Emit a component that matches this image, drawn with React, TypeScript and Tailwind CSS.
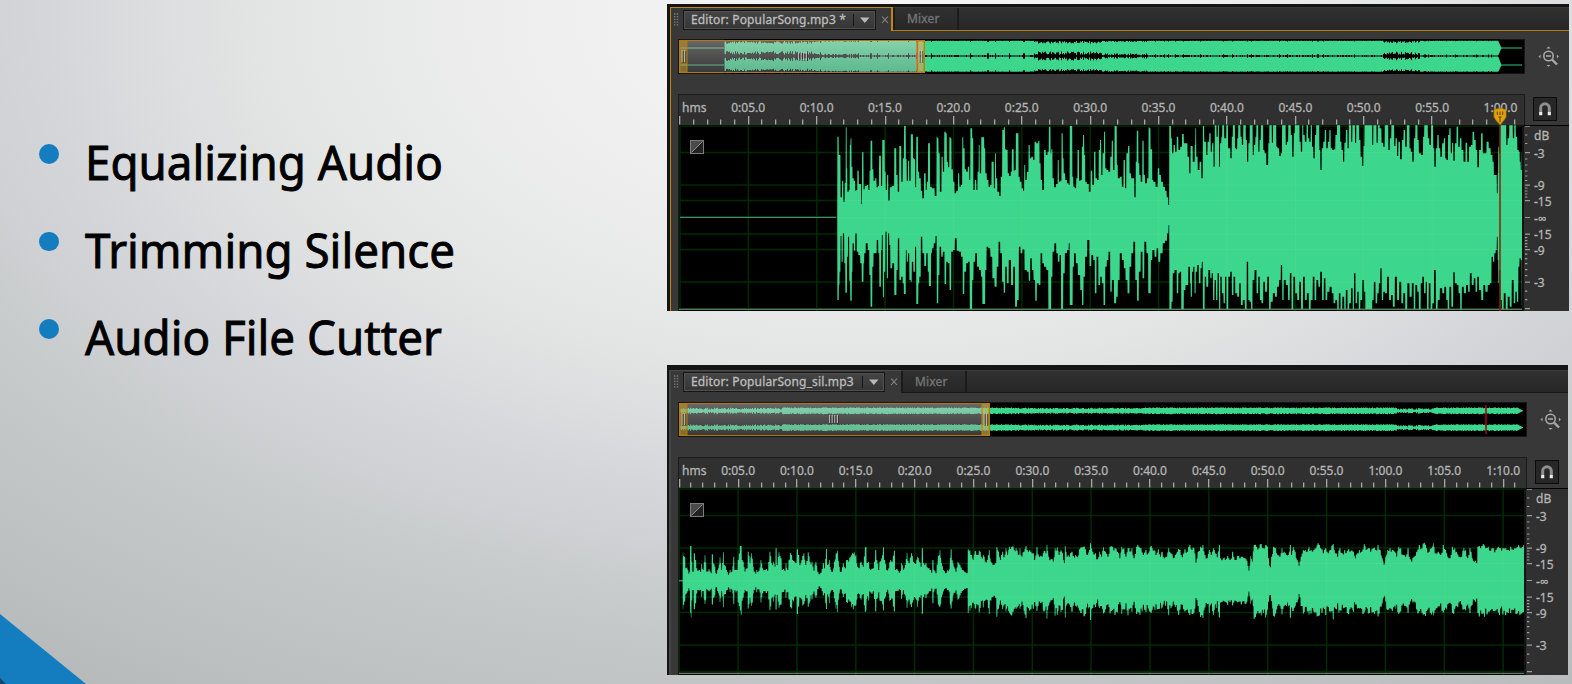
import React from "react";

const GREEN = "#3cd68c";

// Envelope samples are stored at three units per pixel, as x,y pairs.
const A_TOP_1 =
  "52,320 52,80 56,80 56,135 61,135 62,262 66,262 66,212 69,212 71,275 74,275 74,218 77,218 77,52 80,52 80,175 84,245 88,240 90,105 93,85 96,170 99,205 104,212 107,242 111,240 113,182 116,182 117,222 122,222 125,282 127,127 130,127 131,238 137,228 143,225 147,240 150,182 153,92 156,92 158,178 163,212 168,205 171,232 176,228 178,137 182,137 184,228 189,90 193,90 195,185 199,240 203,195 207,272 211,232 220,228 225,115 228,115 230,195 236,245 239,108 243,108 245,215 251,145 253,48 257,48 258,148 262,212 266,152 269,212 275,73 278,73 280,145 284,148 287,232 290,80 293,80 295,185 300,205 305,242 309,265 315,190 319,240 322,215 326,100 329,100 331,230 340,235 348,258 351,80 354,85 357,130 362,245 367,140 370,185 375,65 379,70 382,155 386,172 390,82 393,85 396,178 402,215 405,250 412,242 416,190 420,230 425,225 428,82 432,115 436,178 441,185 446,170 450,210 452,55 455,55 458,85 462,240 467,210 471,240 474,185 478,105 480,190 487,82 491,82 494,115 498,190 503,210 508,230 513,225 516,155 520,155 523,235 527,130 529,205 535,245 540,258 544,200 549,60 554,52 556,118 562,120 564,190 570,198 574,185 577,118 580,118 582,182 586,180 589,70 594,70 597,200 602,215 607,235 611,242 614,165 618,210 623,185 628,105 631,145 637,140 641,150 646,95 652,100 657,92 660,160 664,210 669,240 675,120 680,135 685,125 688,50 691,50 692,130 696,118 699,205 705,232 711,222 715,150 718,215 724,212 725,70 728,70 729,145 733,190 738,210 744,220 748,225 750,48 756,48 758,200 762,230 767,235 770,205 775,120 779,212 784,210 787,110 791,75 794,135 797,215 804,222 809,245 815,182 819,225 825,125 828,205 834,210 838,120 842,90 845,195 850,130 854,65 857,175 862,180 868,185 873,140 877,92 881,180 886,48 890,48 891,165 896,205 903,200 908,230 913,150 917,235 921,130 927,108 930,190 936,205 941,205 945,262 949,155 951,62 954,62 956,160 960,195 964,215 970,92 972,195 978,220 984,205 987,52 990,55 993,118 996,118 997,210 1003,215 1010,230 1016,175 1020,195 1026,215 1032,230 1038,242 1042,262 1047,285 1048,48 1052,48 1054,85 1058,130 1063,105 1067,125 1073,80 1077,120 1084,110 1088,72 1095,100 1100,100 1105,140 1110,190";
const A_BOT_1 =
  "52,320 52,570 56,570 57,525 60,485 63,378 66,455 71,370 74,460 78,548 80,548 82,440 86,380 89,512 92,572 95,572 96,485 99,400 104,422 108,370 112,425 118,435 123,460 127,515 130,515 131,460 134,430 140,400 146,420 150,495 153,590 156,590 158,470 163,430 168,430 172,390 177,430 179,530 182,530 184,420 187,375 190,562 194,485 198,365 202,505 206,370 209,405 213,475 220,460 225,555 228,555 231,480 236,385 240,510 246,500 250,520 253,552 257,552 258,420 262,455 266,430 270,510 274,515 277,455 283,485 287,410 290,582 294,582 296,520 300,500 305,380 309,430 316,468 321,430 325,485 328,528 332,528 334,430 338,415 344,400 349,378 351,580 354,580 356,495 361,410 366,440 371,425 376,522 381,455 386,460 391,540 396,425 402,420 407,385 413,422 420,425 426,440 430,552 436,485 441,460 447,455 451,597 455,597 458,510 463,455 468,430 474,470 480,480 486,500 488,582 494,582 497,480 502,410 508,415 514,440 520,505 527,530 533,470 538,395 543,430 549,515 553,548 558,470 563,520 569,450 577,525 582,470 588,590 594,570 599,410 604,430 610,418 617,480 624,485 628,512 633,445 638,480 643,510 648,572 653,520 659,525 664,430 669,460 675,470 682,480 688,597 692,597 695,500 700,425 706,400 711,430 716,455 721,435 725,597 728,597 731,490 738,430 744,420 748,400 750,585 757,585 759,470 765,430 770,460 777,495 784,540 788,585 793,500 797,440 806,390 811,468 817,435 822,450 827,550 832,440 838,525 843,500 848,520 853,585 858,470 863,450 868,425 873,545 878,510 886,580 891,560 896,510 902,430 909,450 914,475 919,510 926,550 931,470 937,430 943,395 948,510 954,572 959,485 965,425 970,505 976,395 982,430 987,550 991,550 994,450 1000,420 1007,440 1012,415 1018,455 1024,430 1032,400 1038,392 1044,370 1047,345 1049,600 1053,600 1056,575 1060,490 1067,480 1073,550 1077,490 1081,485 1086,600 1090,600 1093,540 1100,525 1110,470";
const A_TOP_2 =
  "0,190 3,108 7,108 9,155 13,155 15,105 17,55 20,140 26,180 31,155 37,205 40,48 42,48 43,95 47,95 50,135 55,95 60,70 64,125 68,100 73,170 75,46 79,46 80,80 83,80 84,46 86,46 88,170 92,100 96,80 97,46 101,46 104,85 108,85 110,46 113,46 115,115 119,115 123,145 127,80 130,46 134,46 136,115 140,118 143,85 146,46 150,46 153,80 158,105 161,46 166,46 169,90 173,155 177,100 181,46 187,46 189,135 194,105 198,80 200,46 204,46 206,125 211,90 214,46 218,46 221,120 226,130 232,165 237,100 239,46 244,46 247,98 251,46 258,46 260,110 265,115 270,138 275,130 277,46 286,46 288,105 293,95 296,46 301,46 304,75 309,140 313,70 316,46 327,46 330,95 335,125 338,46 342,75 347,95 352,46 356,85 360,95 364,46 368,110 372,145 377,75 380,46 387,46 389,120 393,180 397,115 402,95 406,60 411,115 416,95 420,60 424,115 429,120 434,118 438,75 444,46 449,46 452,95 457,120 461,155 465,98 470,60 475,115 478,46 482,46 485,95 489,46 494,46 496,98 501,46 506,46 509,90 514,140 519,168 522,108 525,46 545,46 548,105 552,46 558,46 561,98 566,46 572,55 577,98 582,110 586,46 593,46 597,120 602,85 606,46 611,46 614,108 619,85 623,138 627,95 633,148 638,90 643,60 648,110 653,46 657,46 660,115 665,125 669,155 674,85 678,46 681,46 684,90 689,130 697,135 701,80 704,46 712,46 715,85 721,105 725,46 728,46 731,115 735,170 740,115 744,75 749,115 753,140 759,100 764,85 767,145 772,150 776,75 780,55 784,130 788,98 792,152 797,100 802,50 807,110 812,85 817,120 824,155 829,98 834,155 840,110 845,105 850,65 855,90 860,120 864,172 870,120 876,70 880,130 886,130 893,95 899,115 905,135 910,155 913,195 919,195 922,250 924,190 925,110 929,130 933,46 948,46 950,105 955,85 960,46 967,46 970,85 975,46 980,80 984,120 988,125 990,155 994,180 996,130 999,130";
const A_BOT_2 =
  "0,520 4,560 8,485 12,470 15,550 19,485 24,465 29,520 34,475 37,455 40,597 43,597 45,500 52,530 58,480 63,505 67,490 71,570 76,510 80,570 85,490 89,600 93,500 98,550 103,580 107,500 112,597 118,500 123,485 128,555 133,500 138,550 145,560 150,520 155,585 162,570 167,597 173,455 176,570 181,575 185,597 190,510 197,480 202,550 207,500 212,570 217,580 222,515 228,545 235,500 239,597 245,575 252,550 258,560 264,530 270,510 275,465 278,570 284,510 291,525 297,570 302,490 307,600 313,500 318,550 325,570 330,515 336,600 342,500 347,570 354,550 359,597 365,570 371,500 376,570 382,510 388,530 393,485 399,570 404,505 409,570 415,545 422,530 428,550 433,580 439,570 444,600 449,550 454,597 460,560 465,597 470,540 475,597 480,580 486,535 490,597 494,490 499,580 504,545 508,597 514,570 520,510 524,545 528,600 544,600 549,570 554,515 559,580 564,550 569,520 573,475 577,570 582,545 588,550 594,500 600,570 606,555 611,590 618,500 624,570 631,515 637,580 642,550 649,600 655,520 662,560 669,520 673,597 679,525 684,545 689,600 695,520 699,500 705,550 709,515 713,597 719,520 724,600 729,580 735,480 740,597 746,570 753,535 760,550 766,530 771,570 775,600 781,530 787,590 792,487 797,520 803,525 808,550 813,597 818,530 825,550 831,525 837,545 842,490 848,525 854,505 859,545 864,500 870,540 877,570 883,525 889,545 897,525 902,520 907,440 911,455 915,430 919,420 922,380 924,450 926,520 930,480 933,570 938,600 944,550 950,600 956,560 962,590 968,510 974,580 978,545 983,575 987,470 990,445 994,450 996,585 999,585";
const B_1 =
  "68,182 68,97 74,110 78,145 84,150 89,155 91,78 94,78 95,125 99,155 103,100 107,120 110,145 118,150 122,155 125,132 130,150 135,105 140,155 147,148 154,160 156,103 158,103 160,130 165,140 170,162 175,145 180,112 185,150 190,97 193,135 200,150 205,165 210,150 216,155 221,110 225,150 231,150 235,120 241,78 244,78 246,120 250,125 255,155 261,145 265,95 270,130 275,100 280,140 285,155 290,150 297,152 303,120 308,145 315,150 323,152 330,95 335,130 340,125 345,140 348,85 352,135 357,97 363,115 367,150 375,152 378,130 383,150 392,100 398,120 404,125 408,130 412,88 416,105 420,135 425,120 432,100 437,135 445,97 450,125 456,125 462,152 468,125 473,155 483,158 490,130 494,145 499,87 503,135 508,120 513,150 518,155 523,125 528,100 533,92 538,140 544,155 550,130 556,145 560,120 566,125 572,110 577,100 583,97 588,105 593,140 598,145 603,125 610,140 616,82 619,82 620,130 626,125 632,150 640,145 647,90 651,120 656,150 660,125 665,115 670,82 674,120 680,150 686,145 692,120 697,125 703,92 707,150 712,148 718,158 725,130 730,150 736,135 741,100 747,130 755,100 760,125 767,132 773,110 778,125 783,140 787,85 791,130 798,130 805,145 810,150 815,158 819,120 822,150 828,160 835,108 840,90 845,130 850,150 857,160 862,150 868,148 873,88 877,120 882,140 888,155 894,125 900,135 907,150 914,155 921,160 925,88 930,90 935,105 940,120 945,92 950,105 958,92 964,110 970,105 976,125 982,120 988,90 993,125 999,135 1007,130 1011,82 1016,95 1021,120 1028,95 1032,112 1038,85 1043,105 1048,80 1055,80 1063,90 1068,85 1075,105 1080,85 1086,110 1092,95 1098,78 1105,95 1113,95 1120,100 1124,120 1131,82 1138,110 1147,110 1152,92 1158,100 1161,75 1166,110 1173,118 1180,125 1185,85 1192,82 1197,105 1203,90 1208,100 1213,130 1216,78 1221,110 1228,110 1236,95 1240,108 1247,105 1252,112 1258,88 1268,82 1277,88 1283,105 1288,90 1292,70 1298,95 1307,100 1313,118 1319,95 1325,110 1330,82 1337,95 1344,110";
const B_2 =
  "0,200 8,200 15,205 22,215 30,235 35,200 42,205 48,230 54,205 60,215 66,205 72,235 80,200 87,200 93,205 100,225 108,210 115,220 121,200 127,205 132,210 138,225 145,208 152,230 157,215 163,235 170,230 176,205 183,220 190,235 196,225 202,215 210,210 217,232 225,208 232,215 240,195 246,210 252,205 258,248 264,215 272,200 279,195 285,225 292,235 298,210 304,225 311,205 316,220 322,232 328,195 332,235 340,235 346,240 353,228 360,240 368,215 375,240 382,228 390,235 398,230 405,235 411,242 417,272 422,228 427,245 432,195 440,200 447,205 454,192 460,205 467,195 472,200 476,235 481,262 485,230 490,200 497,205 503,225 510,230 516,205 522,215 530,225 535,225 541,195 545,225 550,200 556,215 562,240 567,258 573,230 580,210 586,210 592,215 597,200 603,210 612,210 618,205 624,190 632,205 640,220 647,205 655,220 662,210 670,192 676,220 683,230 690,205 697,220 704,210 712,212 720,215 726,210 731,215 736,235 742,220 748,210 755,215 763,192 768,210 775,205 782,215 790,205 797,210 804,195 811,210 817,235 822,255 827,230 833,210 840,205 847,210 855,215 860,230 866,200 872,205 880,225 887,230 894,205 898,230 905,245 912,230 920,215 928,195 936,205 943,188 950,205 957,215 965,205 970,190 975,220 985,215 992,225 1000,195 1007,210 1013,230 1020,235 1027,200 1035,205 1040,215 1047,230 1055,230 1062,205 1067,210 1073,235 1080,205 1087,235 1093,245 1100,250 1104,200 1112,205 1120,192 1127,205 1135,200 1142,212 1150,205 1158,210 1165,200 1172,205 1178,205 1187,205 1195,210 1202,200 1210,210 1218,205 1226,195 1233,205 1242,195 1245,230";

type Pt = [number, number];

// Converts stored samples to plot pixels.
const pts = (s: string, dx: number, dy: number): Pt[] =>
  s.split(" ").map((p) => {
    const [x, y] = p.split(",").map(Number);
    return [x / 3 + dx, y / 3 + dy];
  });

const rand = (n: number) => {
  const v = Math.sin(n * 127.1 + 11.7) * 43758.5453;
  return v - Math.floor(v);
};

// Holds each sample until halfway to the next one, so peaks stand as narrow columns.
const steps = (p: Pt[]): Pt[] => {
  const out: Pt[] = [];
  p.forEach(([x, y], i) => {
    const l = i ? (p[i - 1][0] + x) / 2 : x;
    const r = i < p.length - 1 ? (p[i + 1][0] + x) / 2 : x;
    out.push([l + 0.1, y], [r - 0.1, y]);
  });
  return out;
};

const area = (top: Pt[], bottom: Pt[]) =>
  "M" + [...steps(top), ...steps(bottom).reverse()].map(([x, y]) => `${x.toFixed(1)} ${y.toFixed(1)}`).join("L") + "Z";

// Plot origin is x=679, y=125 for the first editor and x=679, y=488 for the second.
const waveA = area(
  [...pts(A_TOP_1, 141, -15), ...pts(A_TOP_2, 511, -15)],
  [...pts(A_BOT_1, 141, -15), ...pts(A_BOT_2, 511, -15)],
);

// Adds a sample between wide neighbours to keep the fine texture.
const fine = (p: Pt[], spread: number): Pt[] =>
  p.flatMap(([x, y], i): Pt[] => {
    const next = p[i + 1];
    if (!next || next[0] - x < 1.6) return [[x, y]];
    return [[x, y], [(x + next[0]) / 2, (y + next[1]) / 2 + (rand(i) - 0.4) * spread]];
  });
const topB = fine([...pts(B_1, -19, 32), ...pts(B_2, 431, -8)], 5);
const botB = topB.map(([x, y], i): Pt => [x, 92.8 + (92.8 - y) * (0.84 + 0.24 * rand(i))]);
const waveB = area(topB, botB);

function columns(from: number, to: number, fn: (x: number) => string) {
  let d = "";
  for (let x = from; x < to; x += 1) d += fn(x);
  return d;
}

const gapSize = (x: number) => {
  if (x < 143) return 5;
  if (x < 180) return 2.4;
  if (x < 356) return 1.6;
  if (x < 424) return 4.6;
  if (x < 470) return 2.6;
  if (x < 705) return 1;
  if (x < 742) return 4.4;
  return 0.9;
};

const gapsA = columns(46, 822, (x) => {
  const g = gapSize(x);
  const r = rand(x);
  const a = g > 2 ? g * (0.25 + 0.75 * r) : r > 0.9 ? g * 1.7 : 0.6 + (r > 0.6 ? 0.5 : 0);
  const e = a * 0.7;
  return `M${x} ${(17 - a).toFixed(1)}h1v${(2 * a).toFixed(1)}h-1zM${x} 0h1v${(e + 1.2).toFixed(1)}h-1zM${x} ${(33.2 - e).toFixed(1)}h1v4h-1z`;
});

const ampB = (x: number) => {
  const r = rand(x + 400);
  if (x > 838) return Math.max(0.5, (845 - x) * 0.5);
  if (x < 105) return 1.3 + r * 1.8;
  if (x > 718 && x < 756) return 1.2 + r * 1.4;
  if (x > 340 && x < 465) return 1.9 + r * 1.1;
  return 2.5 + r * 0.9;
};
const overviewB = columns(2, 845, (x) => {
  const a = ampB(x);
  return `M${x} ${(8.8 - a).toFixed(1)}h1v${(2 * a).toFixed(1)}h-1zM${x} ${(25.6 - a).toFixed(1)}h1v${(2 * a).toFixed(1)}h-1z`;
});

function Grip({ x, y, n = 4, h = 8 }: { x: number; y: number; n?: number; h?: number }) {
  return (
    <g>
      {Array.from({ length: n }, (_, i) => (
        <g key={i}>
          <rect x={x + i * 2.6} y={y} width="1.2" height={h} fill="#c9c9c9" opacity="0.8" />
          <rect x={x + i * 2.6 + 1.2} y={y + 1} width="0.9" height={h} fill="#222" opacity="0.7" />
        </g>
      ))}
    </g>
  );
}

function Overview({ kind }: { kind: "a" | "b" }) {
  const a = kind === "a";
  const w = a ? 847 : 849;
  const end = a ? 246 : 311;
  return (
    <svg width={w} height="35" viewBox={`0 0 ${w} 35`} className="block">
      <defs>
        <linearGradient id={`sel-${kind}`} x1="0" y1="0" x2="0" y2="1">
          <stop offset="0" stopColor="#d0d0d0" stopOpacity="0.5" />
          <stop offset="1" stopColor="#909090" stopOpacity="0.4" />
        </linearGradient>
      </defs>
      <rect width={w} height="35" fill="#161616" />
      <rect x="1" y="1" width={w - 2} height="33" fill="#000" />
      {a ? (
        <g>
          <path d="M2 9h44M2 26h44M822 9h22M822 26h22" stroke="#238354" strokeWidth="1.6" />
          <path d="M46.5 1.5H820L823.5 9L820 17L823.5 26L820 33.5H46.5Z" fill={GREEN} />
          <path d={gapsA} fill="#000" />
        </g>
      ) : (
        <path d={overviewB} fill={GREEN} />
      )}
      <rect x="2" y="1" width={end - 2} height="33" fill={`url(#sel-${kind})`} />
      <rect x="1.5" y="1.5" width={end - 1} height="32" fill="none" stroke="#b07a10" />
      <rect x="2" y="2" width="7" height="31" fill="#c99a20" fillOpacity="0.5" stroke="#b07c0f" />
      <rect x={end - 7} y="2" width="7" height="31" fill="#d0b040" fillOpacity="0.5" stroke="#b8860f" />
      <Grip x={3.5} y={11} n={2} h={12} />
      <Grip x={end - 5.5} y={11} n={2} h={12} />
      <Grip x={a ? 120 : 151} y={13} n={4} />
      {a ? (
        <path d="M239.5 2V33" stroke="#e0622c" strokeWidth="1.4" />
      ) : (
        <path d="M808 3V32" stroke="#a00808" strokeWidth="1.6" />
      )}
    </svg>
  );
}

const H_LINES = [1, 27.5, 60, 75.5, 92.3, 109, 124.5, 157, 183.5];

function Plot({ kind }: { kind: "a" | "b" }) {
  const a = kind === "a";
  const w = a ? 845 : 847;
  const h = a ? 186 : 187;
  const step = a ? 68.37 : 58.85;
  const start = a ? 1 : 0.2;
  const n = a ? 13 : 15;
  const grid = (
    <path
      d={
        Array.from({ length: n }, (_, i) => `M${(start + i * step).toFixed(1)} 0V${h}`).join("") +
        H_LINES.map((y) => `M1 ${y}H${w - 2}`).join("")
      }
      fill="none"
    />
  );
  return (
    <svg width={w} height={h} viewBox={`0 0 ${w} ${h}`} className="block">
      <rect width={w} height={h} fill="#000" />
      <g stroke="#002a00" strokeWidth="1.5">
        {grid}
      </g>
      <path d={a ? "M1 92.4H157" : "M0 92.8H4"} stroke="#3f8f68" strokeWidth="1.4" />
      <path d={a ? waveA : waveB} fill={GREEN} />
      <g stroke="#5be08a" strokeOpacity="0.35" strokeWidth="1" clipPath={`url(#clip-${kind})`}>
        {grid}
      </g>
      <clipPath id={`clip-${kind}`}>
        <path d={a ? waveA : waveB} />
      </clipPath>
      <path d={`M0 ${h - 1.7}H${w - 1}`} stroke="#5f7d66" strokeWidth="1.2" />
      {a && <path d="M821 0V186" stroke="#86200c" strokeWidth="1.5" />}
      <rect x={w - 2} width="2" height={h} fill="#141414" />
      <rect x="11.5" y="15.5" width="13" height="13" fill="#4a4a4a" stroke="#7c7c7c" />
      <path d="M24 16V28H12Z" fill="#222" />
      <path d="M12.5 27.5L23.5 16.5" stroke="#8c8c8c" strokeWidth="1" />
    </svg>
  );
}

function Ticks({ kind }: { kind: "a" | "b" }) {
  const a = kind === "a";
  const w = a ? 845 : 847;
  const minor = (a ? 68.37 : 58.85) / 5;
  const start = a ? 0.4 : -0.3;
  const n = a ? 62 : 72;
  return (
    <svg width={w} height="9" viewBox={`0 0 ${w} 9`} className="block">
      {Array.from({ length: n }, (_, i) => (
        <rect
          key={i}
          x={Math.max(0, Math.round(start + i * minor))}
          y={i % 5 ? 3.5 : 0}
          width="1.3"
          height={i % 5 ? 5 : 8.5}
          fill="#a8a8a8"
        />
      ))}
    </svg>
  );
}

function ZoomIcon() {
  return (
    <svg width="22" height="22" viewBox="0 0 22 22" fill="none" className="block">
      <circle cx="10.5" cy="10" r="4.7" stroke="#a9a9a9" strokeWidth="1.6" />
      <path d="M8 10H13" stroke="#a9a9a9" strokeWidth="1.6" />
      <path d="M14 13.5L19 18.5" stroke="#a9a9a9" strokeWidth="2.4" />
      <path d="M10.5 0.6L12.6 2.5H8.4ZM10.5 20.8L12.6 18.9H8.4ZM0.6 10.5L2.5 8.4V12.6ZM20.8 10.5L18.9 8.4V12.6Z" fill="#a9a9a9" />
    </svg>
  );
}

function Magnet() {
  return (
    <div className="flex h-6 w-6 items-center justify-center border border-[#0c0c0c] bg-[#272727]">
      <svg width="14" height="16" viewBox="0 0 14 16" fill="none">
        <path d="M2.7 14V7A4.3 4.3 0 0 1 11.3 7V14" stroke="#8f8f8f" strokeWidth="3" />
        <path d="M2.7 11V14.2M11.3 11V14.2" stroke="#ececec" strokeWidth="3" />
      </svg>
    </div>
  );
}

function DbScale({ h }: { h: number }) {
  const minor = [10, 18.5, 34, 40, 46, 51, 55.5, 63, 66, 69, 72];
  return (
    <div className="flex flex-1 border-t border-black bg-[#303030]">
      <svg width="7" height={h - 1} viewBox={`0 1 7 ${h - 1}`} className="block shrink-0">
        <path
          d={H_LINES.map((y) => `M1 ${y + 0.2}H6`).join("") + [...minor, ...minor.map((m) => 184.6 - m)].map((y) => `M1 ${y}H3.4`).join("")}
          stroke="#9a9a9a"
          strokeWidth="1.2"
        />
      </svg>
      <div className="flex flex-col pt-px pl-[3px] text-[12px] leading-none text-[#b4b4b4] [-webkit-text-stroke:0.3px_#b4b4b4]">
        <span className="flex h-[18px] items-center">dB</span>
        <span className="flex h-[17px] items-center">-3</span>
        <span className="mt-[16px] flex h-[16px] items-center">-9</span>
        <span className="flex h-[16px] items-center">-15</span>
        <span className="flex h-[17px] items-center">-∞</span>
        <span className="flex h-[16px] items-center">-15</span>
        <span className="flex h-[16px] items-center">-9</span>
        <span className="mt-[16px] flex h-[16px] items-center">-3</span>
      </div>
    </div>
  );
}

function Header({ kind, title }: { kind: "a" | "b"; title: string }) {
  const a = kind === "a";
  return (
    <div className={a ? "flex h-[24px]" : "flex h-[23px]"}>
      <div
        className={
          a
            ? "flex w-[222px] items-center border-t border-r-2 border-[#c08512] bg-[#383838]"
            : "flex w-[230px] items-center border-t border-[#4c4c4c] bg-[#383838]"
        }
      >
        <svg width="12" height="14" viewBox="0 0 12 14" className="block shrink-0">
          {[0, 1, 2, 3, 4].map((i) => (
            <path key={i} d={`M3 ${i * 2.7 + 1}h1.4M5.8 ${i * 2.7 + 1}h1.4`} stroke="#7d7d7d" strokeWidth="1.3" />
          ))}
        </svg>
        <div
          className={
            a
              ? "flex h-[20px] w-[193px] items-center border border-[#161616] bg-gradient-to-b from-[#454545] to-[#353535] outline outline-1 -outline-offset-2 outline-[#505050]"
              : "flex h-[20px] w-[202px] items-center border border-[#161616] bg-gradient-to-b from-[#454545] to-[#353535] outline outline-1 -outline-offset-2 outline-[#505050]"
          }
        >
          <span className="flex-1 pl-[7px] text-[12px] leading-none tracking-[0.15px] whitespace-nowrap text-[#bdbdbd] [-webkit-text-stroke:0.3px_#bdbdbd]">
            {title}
          </span>
          <svg width="22" height="14" viewBox="0 0 22 14" className="block shrink-0">
            <path d="M0.5 1V13" stroke="#171717" />
            <path d="M7 4.5H16.5L11.8 10Z" fill="#b8b8b8" />
          </svg>
        </div>
        <svg width="15" height="10" viewBox="0 0 15 10" className="block shrink-0">
          <path d="M6 1.5L12 8M12 1.5L6 8" stroke="#8c8c8c" strokeWidth="1.1" />
        </svg>
      </div>
      <div
        className={
          a
            ? "flex flex-1 border-t border-b border-t-[#3a3a3a] border-b-[#b07a14] bg-gradient-to-b from-[#303030] to-[#272727]"
            : "flex flex-1 border-t border-b border-t-[#3a3a3a] border-b-[#161616] bg-gradient-to-b from-[#303030] to-[#272727]"
        }
      >
        <div className="flex w-[66px] items-center border-r-2 border-l-2 border-[#1b1b1b] pl-[12px] text-[12px] leading-none tracking-[0.15px] text-[#767676] [-webkit-text-stroke:0.3px_#767676]">
          Mixer
        </div>
      </div>
    </div>
  );
}

function Editor({ kind, title, labels }: { kind: "a" | "b"; title: string; labels: string[] }) {
  const a = kind === "a";
  return (
    <section
      className={
        a
          ? "flex h-[307px] w-[902px] flex-col bg-[#141414] pt-[3px] pl-[3px]"
          : "flex h-[310px] w-[901px] flex-col bg-[#141414] pt-[5px] pl-[2px]"
      }
    >
      <div
        className={
          a
            ? "flex flex-1 flex-col border-l border-[#c08512] bg-[#383838]"
            : "flex flex-1 flex-col border-l-2 border-[#454545] bg-[#383838]"
        }
      >
        <Header kind={kind} title={title} />
        <div className={a ? "mt-[8px] ml-[7px] flex" : "mt-[9px] ml-[7px] flex"}>
          <Overview kind={kind} />
          <div className="flex flex-1 items-center pl-[13px]">
            <ZoomIcon />
          </div>
        </div>
        <div className="mt-[20px] ml-[7px] flex h-[31px]">
          <div
            className={
              a
                ? "flex w-[847px] flex-col border-x border-t border-[#1a1a1a] bg-[#303030]"
                : "flex w-[849px] flex-col border-x border-t border-[#1a1a1a] bg-[#303030]"
            }
          >
            <div className="flex h-[21px] items-end overflow-hidden text-[12px] leading-[17px] text-[#b4b4b4] [-webkit-text-stroke:0.3px_#b4b4b4]">
              <span className={a ? "w-[35px] shrink-0 pl-[3px]" : "w-[29.7px] shrink-0 pl-[3px] whitespace-nowrap"}>hms</span>
              {labels.map((l) => (
                <span key={l} className={a ? "w-[68.4px] shrink-0 text-center" : "w-[58.85px] shrink-0 text-center"}>
                  {l}
                </span>
              ))}
            </div>
            <Ticks kind={kind} />
          </div>
          <div className="flex flex-1 items-start pt-[3px] pl-[8px]">
            <Magnet />
          </div>
        </div>
        <div className={a ? "ml-[7px] flex h-[186px] bg-[#1a1a1a] pl-px" : "ml-[7px] flex h-[187px] bg-[#1a1a1a] pl-px"}>
          <Plot kind={kind} />
          <DbScale h={a ? 186 : 187} />
        </div>
      </div>
    </section>
  );
}

const marks = (n: number) =>
  Array.from({ length: n }, (_, i) => {
    const s = (i + 1) * 5;
    return `${Math.floor(s / 60)}:${String(s % 60).padStart(2, "0")}.0`;
  });

const bullets = ["Equalizing Audio", "Trimming Silence", "Audio File Cutter"];

export default function App() {
  return (
    <main className="relative flex h-[684px] w-[1572px] overflow-hidden bg-[radial-gradient(ellipse_1250px_740px_at_860px_20px,#f6f6f6_0%,#eeeeee_28%,#e3e5e4_48%,#d5d6da_65%,#c4c8c8_85%,#bcc0c0_100%,#b3b6b6_115%)] font-['Noto_Sans','Open_Sans',sans-serif]">
      <ul className="flex w-[667px] flex-col pt-[119px] pl-[39px] text-black">
        {bullets.map((text) => (
          <li key={text} className="flex h-[87.7px] items-start">
            <span className="mt-[25px] h-[19.5px] w-[19.5px] shrink-0 rounded-full bg-[#147dc0]" />
            <span className="ml-[26px] origin-left scale-x-[0.953] text-[48px] leading-[86px] whitespace-nowrap [-webkit-text-stroke:0.9px_black]">
              {text}
            </span>
          </li>
        ))}
      </ul>
      <div className="flex flex-col gap-[54px] pt-[4px]">
        <Editor kind="a" title="Editor: PopularSong.mp3 *" labels={marks(12)} />
        <Editor kind="b" title="Editor: PopularSong_sil.mp3" labels={marks(14)} />
      </div>
      <svg width="86" height="70" viewBox="0 0 86 70" className="absolute bottom-0 left-0">
        <path d="M0 0L86 70H0Z" fill="#147dc0" />
        <path d="M0 64L6 70H0Z" fill="#17466b" />
      </svg>
      <svg width="14" height="18" viewBox="0 0 14 18" className="absolute top-[108px] left-[1493px]">
        <path d="M1 1.5Q7 -0.5 13 1.5V9Q11 13 7 16.5Q3 13 1 9Z" fill="#e2a20c" stroke="#b17c06" strokeWidth="0.8" />
        <path d="M4.3 3.5V7M7 3.5V7M9.7 3.5V7M5.5 9H8.5M7 9V14" stroke="#5c3d00" strokeWidth="1" />
      </svg>
    </main>
  );
}
